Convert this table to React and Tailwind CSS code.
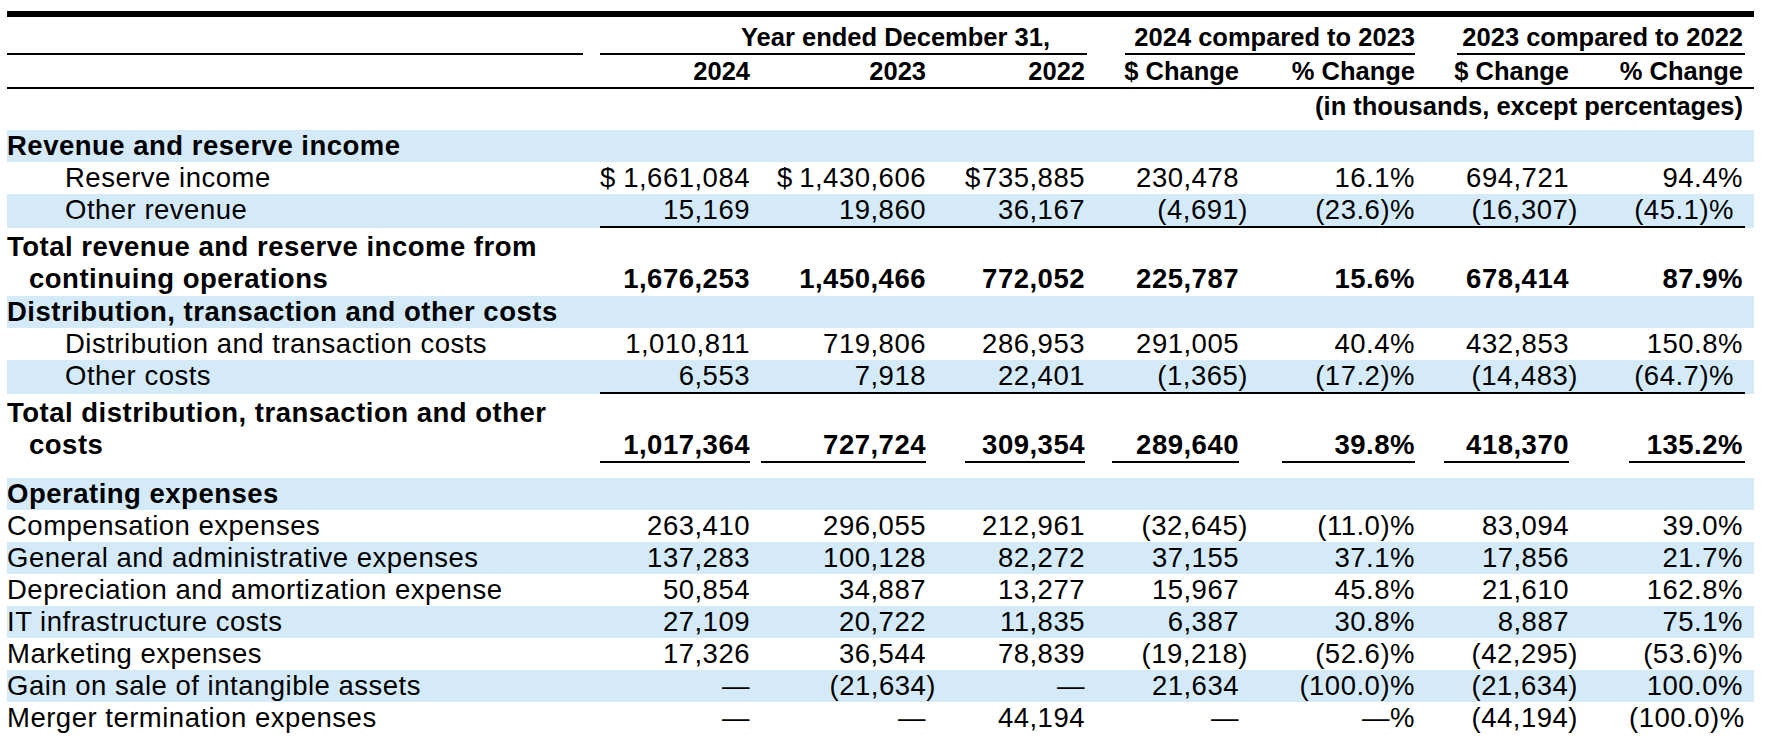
import clsx from "clsx";

const band = "bg-[#d5eaf9]";

// per value column: padding to the number's right edge, underline margins, hanging ")" offset
const cols = [
  { pad: "pr-[11px]", under: "mr-[11px]", hang: "-mr-[10px]" },
  { pad: "pr-[39px]", under: "mr-[39px]", hang: "-mr-[10px]", dollar: "pl-[16px]" },
  { pad: "pr-[27px]", under: "mr-[27px]", hang: "-mr-[10px]" },
  { pad: "pr-[43px]", under: "mr-[43px]", hang: "-mr-[9px]" },
  { pad: "pr-[29px]", under: "mr-[29px]" },
  { pad: "pr-[60px]", under: "mr-[60px]", hang: "-mr-[9px]" },
  { pad: "pr-[11px]", under: "mr-[9px] pr-[2px]", cont: "mr-[9px]" },
];

const rows = [
  { label: "Revenue and reserve income", band: true, bold: true },
  {
    label: "Reserve income",
    indent: true,
    dollar: true,
    values: ["1,661,084", "1,430,606", "735,885", "230,478", "16.1%", "694,721", "94.4%"],
  },
  {
    label: "Other revenue",
    indent: true,
    band: true,
    line: "cont",
    values: ["15,169", "19,860", "36,167", "(4,691)", "(23.6)%", "(16,307)", "(45.1)%"],
  },
  {
    label: "Total revenue and reserve income from continuing operations",
    bold: true,
    hanging: true,
    labelPad: "pt-[3px] pb-[1px]",
    valuePad: "pb-[1px]",
    values: ["1,676,253", "1,450,466", "772,052", "225,787", "15.6%", "678,414", "87.9%"],
  },
  { label: "Distribution, transaction and other costs", band: true, bold: true },
  {
    label: "Distribution and transaction costs",
    indent: true,
    values: ["1,010,811", "719,806", "286,953", "291,005", "40.4%", "432,853", "150.8%"],
  },
  {
    label: "Other costs",
    indent: true,
    band: true,
    line: "cont",
    values: ["6,553", "7,918", "22,401", "(1,365)", "(17.2)%", "(14,483)", "(64.7)%"],
  },
  {
    label: "Total distribution, transaction and other costs",
    bold: true,
    hanging: true,
    line: "total",
    labelPad: "pt-[3px] pb-[17px]",
    valuePad: "pb-[15px]",
    values: ["1,017,364", "727,724", "309,354", "289,640", "39.8%", "418,370", "135.2%"],
  },
  { label: "Operating expenses", band: true, bold: true },
  {
    label: "Compensation expenses",
    values: ["263,410", "296,055", "212,961", "(32,645)", "(11.0)%", "83,094", "39.0%"],
  },
  {
    label: "General and administrative expenses",
    band: true,
    values: ["137,283", "100,128", "82,272", "37,155", "37.1%", "17,856", "21.7%"],
  },
  {
    label: "Depreciation and amortization expense",
    values: ["50,854", "34,887", "13,277", "15,967", "45.8%", "21,610", "162.8%"],
  },
  {
    label: "IT infrastructure costs",
    band: true,
    values: ["27,109", "20,722", "11,835", "6,387", "30.8%", "8,887", "75.1%"],
  },
  {
    label: "Marketing expenses",
    values: ["17,326", "36,544", "78,839", "(19,218)", "(52.6)%", "(42,295)", "(53.6)%"],
  },
  {
    label: "Gain on sale of intangible assets",
    band: true,
    values: ["—", "(21,634)", "—", "21,634", "(100.0)%", "(21,634)", "100.0%"],
  },
  {
    label: "Merger termination expenses",
    values: ["—", "—", "44,194", "—", "—%", "(44,194)", "(100.0)%"],
  },
];

const ValueCell = ({ value, col, line, dollar, cellPad }) => {
  const text =
    col.hang && value.endsWith(")") ? (
      <>
        {value.slice(0, -1)}
        <span className={col.hang}>)</span>
      </>
    ) : (
      value
    );
  const content = dollar ? (
    <div className={clsx("flex justify-between", col.dollar)}>
      <span>$</span>
      <span>{text}</span>
    </div>
  ) : (
    text
  );

  if (line === "total") {
    return (
      <td className={clsx("align-bottom", cellPad)}>
        <div className={clsx("border-b-2 border-black text-right", col.under)}>{content}</div>
      </td>
    );
  }
  if (line === "cont") {
    return (
      <td className={clsx("align-bottom", cellPad)}>
        <div className={clsx("border-b-2 border-black", col.cont)}>
          <div className={clsx("text-right", col.pad)}>{content}</div>
        </div>
      </td>
    );
  }
  return <td className={clsx("align-bottom text-right", col.pad, cellPad)}>{content}</td>;
};

const App = () => {
  const heads = ["2024", "2023", "2022", "$ Change", "% Change", "$ Change", "% Change"];
  return (
    <div className="min-h-screen bg-white pl-[7px] pt-[11px] text-black">
      <div className="w-[1747px] font-['Liberation_Sans',Arial,Helvetica,sans-serif] text-[27.5px] leading-[32px] tracking-[0.5px]">
        <div className="h-[6px] bg-black"></div>
        <table className="w-[1747px] table-fixed">
          <colgroup>
            <col className="w-[593px]" />
            <col className="w-[161px]" />
            <col className="w-[204px]" />
            <col className="w-[147px]" />
            <col className="w-[170px]" />
            <col className="w-[162px]" />
            <col className="w-[185px]" />
            <col className="w-[125px]" />
          </colgroup>
          <thead className="text-[25.5px] font-bold tracking-normal">
            <tr>
              <td className="pt-[4px]">
                <div className="mr-[17px] border-b-2 border-black">&nbsp;</div>
              </td>
              <td colSpan={3} className="pt-[4px]">
                <div className="mr-[25px] flex justify-end whitespace-nowrap border-b-2 border-black pr-[37px]">
                  Year ended December 31,
                </div>
              </td>
              <td colSpan={2} className="pt-[4px]">
                <div className="ml-[13px] mr-[29px] flex justify-end whitespace-nowrap border-b-2 border-black">
                  2024 compared to 2023
                </div>
              </td>
              <td colSpan={2} className="pt-[4px]">
                <div className="ml-[13px] mr-[9px] flex justify-end whitespace-nowrap border-b-2 border-black pr-[2px]">
                  2023 compared to 2022
                </div>
              </td>
            </tr>
            <tr>
              <td>
                <div className="border-b-2 border-black">&nbsp;</div>
              </td>
              {heads.map((h, i) => (
                <td key={i}>
                  <div className="border-b-2 border-black">
                    <div className={clsx("flex justify-end whitespace-nowrap", cols[i].pad)}>{h}</div>
                  </div>
                </td>
              ))}
            </tr>
            <tr>
              <td colSpan={8} className="pb-[8px] pr-[11px] pt-[1px] text-right">
                (in thousands, except percentages)
              </td>
            </tr>
          </thead>
          <tbody>
            {rows.map((row) => (
              <tr key={row.label} className={clsx(row.band && band, row.bold && "font-bold")}>
                <td
                  className={clsx(
                    "align-top",
                    row.indent && "pl-[58px]",
                    row.hanging && "pl-[22px] -indent-[22px]",
                    !row.hanging && "whitespace-nowrap",
                    row.labelPad
                  )}
                >
                  {row.label}
                </td>
                {row.values
                  ? row.values.map((v, i) => (
                      <ValueCell
                        key={i}
                        value={v}
                        col={cols[i]}
                        line={row.line}
                        dollar={row.dollar && i < 3}
                        cellPad={row.valuePad}
                      />
                    ))
                  : cols.map((_, i) => <td key={i}></td>)}
              </tr>
            ))}
          </tbody>
        </table>
      </div>
    </div>
  );
};

export default App;
